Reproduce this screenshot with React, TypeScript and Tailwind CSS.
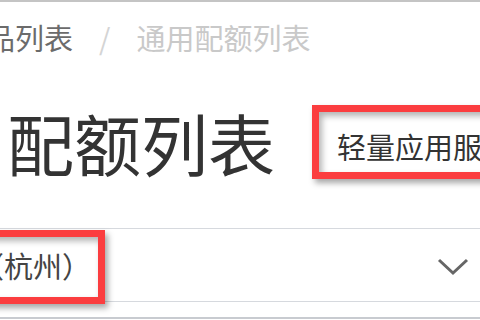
const font = { fontFamily: '"Noto Sans CJK SC", "Noto Sans", sans-serif' };

const App = () => {
  return (
    <div
      className="relative w-[480px] h-[320px] overflow-hidden bg-white border-t-2 border-[#c4c4c4]"
      style={font}
    >
      {/* Breadcrumb */}
      <div className="flex items-center h-[29px] mt-[21px] text-[29px] leading-none whitespace-nowrap">
        <span className="-ml-[14px] text-[#6b6b6b]">品列表</span>
        <span className="ml-[26px] text-[#d4d4d4]">/</span>
        <span className="ml-[26px] text-[#c9c9c9]">通用配额列表</span>
      </div>

      {/* Title row */}
      <div className="flex items-center h-[74px] mt-[52px] whitespace-nowrap">
        <h1 className="-ml-[127px] text-[67px] leading-none text-[#333] font-normal">
          通用配额列表
        </h1>
        <span className="ml-[62px] mt-[10px] text-[29px] leading-none text-[#333]">
          轻量应用服务器
        </span>
      </div>

      {/* Region select */}
      <div className="flex items-center justify-between h-[74px] mt-[50px] border-y border-[#d6d9de] whitespace-nowrap">
        <span className="-ml-[99px] text-[29px] leading-none text-[#444]">华东1（杭州）</span>
        <svg width="32" height="18" viewBox="0 0 32 18" className="mr-[11px] mt-[4px]">
          <path d="M2 2 L16 15 L30 2" fill="none" stroke="#666" strokeWidth="3" />
        </svg>
      </div>

      <div className="mt-[15px] h-[2px] bg-[#c8cbd0]" />

      {/* Annotation boxes */}
      <div className="absolute left-[312px] top-[103px] w-[220px] h-[74px] border-[7px] border-[#fb3d3f] shadow-[3px_4px_6px_rgba(0,0,0,0.35),inset_3px_4px_6px_rgba(0,0,0,0.3)]" />
      <div className="absolute -left-[20px] top-[228px] w-[125px] h-[74px] border-[7px] border-[#fb3d3f] shadow-[3px_4px_6px_rgba(0,0,0,0.35),inset_3px_4px_6px_rgba(0,0,0,0.3)]" />
    </div>
  );
};

export default App;
